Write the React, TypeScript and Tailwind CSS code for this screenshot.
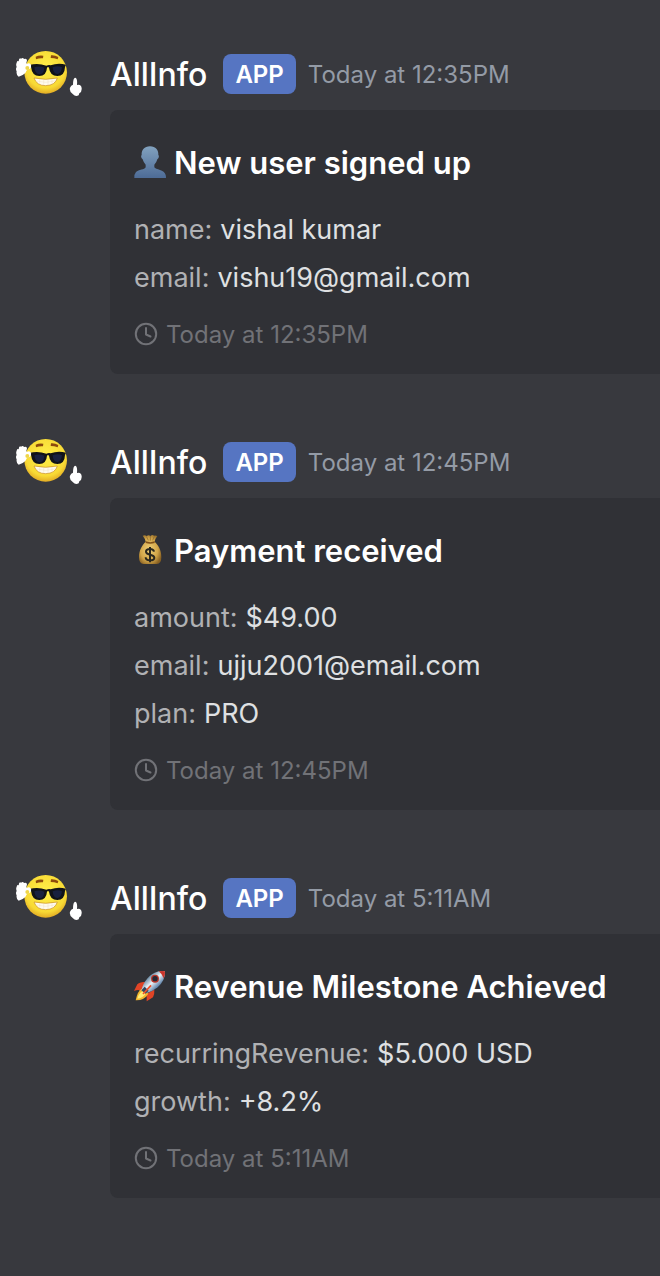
import type { ReactNode } from "react";

function Avatar() {
  return (
    <svg viewBox="48 30 204 138" className="h-[46px] w-[68px] shrink-0" role="img" aria-label="AllInfo avatar">
      <defs>
        <radialGradient id="face" cx="0.5" cy="0.4" r="0.62">
          <stop offset="0" stopColor="#fff04a" />
          <stop offset="0.75" stopColor="#f8da35" />
          <stop offset="1" stopColor="#dfa522" />
        </radialGradient>
      </defs>
      <circle cx="137" cy="97" r="64" fill="url(#face)" />
      <path d="M107 50q10-5 23-3l-1 8q-11-1-21 3zM153 46q12-1 22 5l-2 7q-10-4-21-4z" fill="#8d4b0c" />
      <path d="M88 75q26-7 51 2q8-4 13-1q22-9 46-2l-3 7q-1 27-23 27q-22 0-25-25q-3-4-6 0q-2 25-23 25q-22 0-25-28z" fill="#111318" />
      <path d="M103 82q15-6 30 1q-1 19-15 20q-13-1-15-21zM158 82q15-6 28 0q-2 19-14 20q-13-1-14-20z" fill="#18203f" />
      <path d="M102 114q35 8 70 0q-6 22-35 23q-27 0-35-23z" fill="#fffbed" stroke="#c98d22" strokeWidth="2" />
      <path d="M109 123q28 8 56 0M119 118v12M131 120v15M144 120v15M156 118v12" fill="none" stroke="#ead9b8" strokeWidth="1" />
      <path d="M50 68q1-8 6-4q1-12 7-8q6-5 9 1q9-3 9 5q-3 6-1 10q9-6 13 2q2 12-8 14q-6 2-9 11q-9 9-20 11q-8-4-6-16q-4-8 0-13q-3-7 0-13z" fill="#fff" />
      <circle cx="82" cy="84" r="6" fill="#efd64a" />
      <path d="M219 134q0-19 6-21q8 0 6 22q13-3 14 10q1 11-7 15l-2 6q-10 5-17-3q-12-8-9-20q3-7 9-9z" fill="#fff" />
    </svg>
  );
}

function UserIcon() {
  return (
    <svg viewBox="42 47 96 96" className="size-8 shrink-0" aria-hidden="true">
      <defs>
        <linearGradient id="bust" x1="0" y1="0" x2="0" y2="1">
          <stop offset="0" stopColor="#82a2bf" />
          <stop offset="1" stopColor="#4d6b96" />
        </linearGradient>
      </defs>
      <path d="M90 48c17 0 26 11 25 26c3 2 2 10-3 13q-3 11-9 16v8c3 7 31 7 34 23q1 5 1 9H43q-1-11 5-18c8-7 26-7 29-14v-8q-6-5-9-16c-5-3-6-11-3-13c-1-15 8-26 25-26z" fill="url(#bust)" />
    </svg>
  );
}

function MoneyIcon() {
  return (
    <svg viewBox="42 42 96 96" className="size-8 shrink-0" aria-hidden="true">
      <defs>
        <radialGradient id="sack" cx="0.45" cy="0.5" r="0.6">
          <stop offset="0" stopColor="#efd078" />
          <stop offset="0.65" stopColor="#d1a548" />
          <stop offset="1" stopColor="#886022" />
        </radialGradient>
      </defs>
      <path d="M68 47q6-3 12 1q6-4 11 0q7-5 11-1q5-2 10 1q-6 7-8 17c10 9 20 24 20 46q0 21-14 21H71q-14 0-14-21c0-20 10-37 20-46q-2-10-9-18z" fill="url(#sack)" />
      <path d="M77 64q14 5 27 0v5q-13 5-27 0z" fill="#805118" />
      <path d="M79 49l6 12M91 48v14M103 49l-5 12" stroke="#85602c" strokeWidth="2" />
      <path d="M102 95c-1-6-5-8-12-8s-12 3-12 8c0 12 25 6 25 18c0 6-5 8-13 8s-13-3-13-9M90 81v46" fill="none" stroke="#29271e" strokeWidth="6" />
    </svg>
  );
}

function RocketIcon() {
  return (
    <svg viewBox="42 42 96 96" className="size-8 shrink-0" aria-hidden="true">
      <defs>
        <linearGradient id="hull" x1="0.2" y1="0.2" x2="0.8" y2="0.8">
          <stop offset="0.1" stopColor="#5c7f9c" />
          <stop offset="0.48" stopColor="#edf3f7" />
          <stop offset="0.9" stopColor="#446e9c" />
        </linearGradient>
      </defs>
      <path d="M79 77q-20 0-27 8L42 105q12-5 22-1zM103 101q1 13-4 23l-19 12q2-14-3-21z" fill="#e04426" />
      <path d="M65 98q-12 6-18 35q25 1 38-20z" fill="#f3b52d" />
      <path d="M68 106q-13 7-16 22q16-2 25-15z" fill="#ffed79" />
      <path d="M64 103c7-27 24-49 52-57q12-2 19 0q1 28-22 48q-17 14-35 18z" fill="url(#hull)" />
      <path d="M116 46q12-2 19 0q1 11-4 21q-5-14-15-21z" fill="#c9342a" />
      <path d="M64 103l10-11l12 12l-9 9z" fill="#32465e" />
      <path d="M93 88L69 114" stroke="#ee502b" strokeWidth="5" />
      <circle cx="105" cy="68" r="12" fill="#bd3528" />
      <circle cx="105" cy="68" r="8" fill="#232936" />
    </svg>
  );
}

function ClockIcon() {
  return (
    <svg viewBox="0 0 24 24" className="size-6 shrink-0" fill="none" stroke="currentColor" strokeWidth="2" aria-hidden="true">
      <circle cx="12" cy="12" r="10.2" />
      <path d="M12 6v6.5l4.5 2" strokeLinecap="round" strokeLinejoin="round" />
    </svg>
  );
}

type Message = { time: string; icon: ReactNode; title: string; fields: [string, string][] };

const messages: Message[] = [
  {
    time: "Today at 12:35PM",
    icon: <UserIcon />,
    title: "New user signed up",
    fields: [["name", "vishal kumar"], ["email", "vishu19@gmail.com"]],
  },
  {
    time: "Today at 12:45PM",
    icon: <MoneyIcon />,
    title: "Payment received",
    fields: [["amount", "$49.00"], ["email", "ujju2001@email.com"], ["plan", "PRO"]],
  },
  {
    time: "Today at 5:11AM",
    icon: <RocketIcon />,
    title: "Revenue Milestone Achieved",
    fields: [["recurringRevenue", "$5.000 USD"], ["growth", "+8.2%"]],
  },
];

function MessageItem({ time, icon, title, fields }: Message) {
  return (
    <article className="flex items-start gap-[26px] pl-4">
      <div className="-mt-1">
        <Avatar />
      </div>
      <div className="min-w-0 flex-1">
        <header className="flex h-10 items-center whitespace-nowrap">
          <h2 className="pt-0.5 text-[32px] leading-10 font-medium text-white">AllInfo</h2>
          <span className="ml-4 h-10 rounded-lg bg-[#5675c2] px-3 text-2xl leading-[42px] font-semibold text-white">APP</span>
          <time className="ml-3 pt-0.5 text-2xl leading-10 text-[#949ba6]">{time}</time>
        </header>
        <section className="mt-4 rounded-l-lg bg-[#303136] p-6">
          <h3 className="mb-4 flex items-center gap-2 text-[31px] leading-[56px] font-semibold whitespace-nowrap text-white">
            {icon}
            <span className="pt-0.5 leading-[54px]">{title}</span>
          </h3>
          <dl className="text-[27px] leading-[48px]">
            {fields.map(([label, value]) => (
              <div key={label} className="flex gap-2">
                <dt className="text-[#b0b1b4]">{label}:</dt>
                <dd className="text-[#dfe0e2]">{value}</dd>
              </div>
            ))}
          </dl>
          <footer className="mt-4 flex h-8 items-center gap-2 text-2xl leading-8 text-[#717277]">
            <ClockIcon />
            <time className="pt-0.5">{time}</time>
          </footer>
        </section>
      </div>
    </article>
  );
}

export default function App() {
  return (
    <main className="flex min-h-screen flex-col gap-[68px] overflow-x-hidden bg-[#38393e] pt-[54px] pb-[78px] font-['Inter','Liberation_Sans',sans-serif]">
      {messages.map((message) => (
        <MessageItem key={message.title} {...message} />
      ))}
    </main>
  );
}
